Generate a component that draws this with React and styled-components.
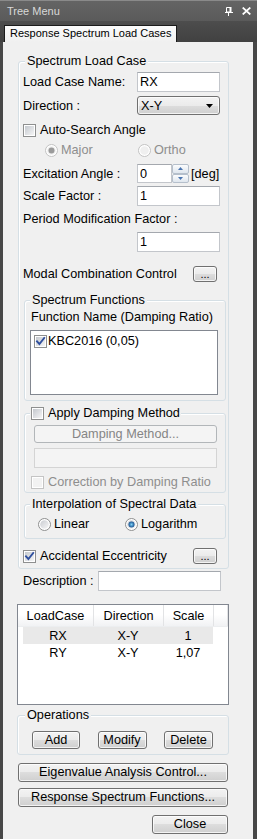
import React from 'react';
import styled, { createGlobalStyle } from 'styled-components';

const GlobalStyle = createGlobalStyle`
  * { box-sizing: border-box; }
  html, body { margin: 0; padding: 0; background: #474747; }
  body {
    font-family: "Liberation Sans", Arial, sans-serif;
    font-size: 12.7px;
    color: #000;
  }
`;

const Window = styled.div`
  width: 257px;
  height: 839px;
  display: flex;
  flex-direction: column;
  background: #474747;
  overflow: hidden;
`;

const TitleBar = styled.div`
  flex: none;
  height: 21px;
  display: flex;
  align-items: center;
  padding: 0 6px 0 7px;
  border-top: 1px solid #8a8a8a;
  background: linear-gradient(#646464, #5a5a5a);
  color: #d8d8d8;
  font-size: 11px;

  span { flex: 1; }
`;

const TitleIcon = styled.svg`
  flex: none;
  display: block;
  margin-left: ${p => p.$ml || 0}px;
`;

const TabStrip = styled.div`
  flex: none;
  height: 21px;
  display: flex;
  align-items: flex-end;
  padding-left: 4px;
  background: linear-gradient(#4d4d4d, #414141);
`;

const Tab = styled.div`
  height: 17px;
  padding: 0 5px;
  line-height: 15px;
  font-size: 11px;
  white-space: nowrap;
  border: 1px solid #1b1b1b;
  border-bottom: 0;
  background: linear-gradient(#fbfbfb, #f0f0f0);
`;

const Content = styled.div`
  flex: 1;
  margin: 0 4px 0 3px;
  padding-left: 14px;
  display: flex;
  flex-direction: column;
  background: #f0f0f0;
`;

const Group = styled.div`
  flex: none;
  display: flex;
  flex-direction: column;
  width: ${p => p.$w}px;
  margin: ${p => p.$mt || 0}px 0 0 ${p => p.$ml || 0}px;
  padding: 0 ${p => p.$pr || 0}px ${p => p.$pb || 0}px ${p => p.$pl || 0}px;
  border: 1px solid #d5dfe5;
  border-radius: 3px;
  box-shadow: inset 1px 1px 0 #fff;
`;

const Legend = styled.div`
  align-self: flex-start;
  display: flex;
  align-items: center;
  gap: 4px;
  height: 16px;
  margin: -9px 0 0 ${p => p.$ml || 0}px;
  padding: 0 ${p => p.$px ?? 2}px;
  background: #f0f0f0;
  white-space: nowrap;
`;

const Row = styled.div`
  flex: none;
  display: flex;
  align-items: center;
  height: ${p => p.$h || 16}px;
  margin: ${p => p.$mt || 0}px 0 0 ${p => p.$ml || 0}px;
  gap: ${p => p.$gap || 0}px;
`;

const Label = styled.span`
  flex: ${p => (p.$grow ? 1 : 'none')};
  width: ${p => (p.$w ? `${p.$w}px` : 'auto')};
  white-space: nowrap;
  color: ${p => (p.$disabled ? '#8e8e8e' : '#000')};
`;

const Item = styled.div`
  flex: none;
  display: flex;
  align-items: center;
  gap: 3px;
  width: ${p => (p.$w ? `${p.$w}px` : 'auto')};
  color: ${p => (p.$disabled ? '#8e8e8e' : '#000')};
`;

const TextBox = styled.input`
  flex: none;
  width: ${p => p.$w}px;
  height: ${p => (p.$h ? `${p.$h}px` : '100%')};
  margin: ${p => p.$mt || 0}px 0 0 ${p => p.$ml || 0}px;
  padding: 0 2px;
  font: inherit;
  color: #000;
  outline: none;
  background: #fff;
  border: 1px solid #c3c6cb;
  border-top-color: #a4a8ae;

  &:disabled {
    background: #f4f4f4;
    border-color: #d4d4d4;
  }
`;

const Button = styled.button`
  flex: none;
  width: ${p => p.$w}px;
  height: ${p => p.$h || 18}px;
  margin: ${p => p.$mt || 0}px ${p => p.$mr || 0}px 0 ${p => p.$ml || 0}px;
  padding: 0;
  font: inherit;
  font-size: ${p => p.$fs || 12.7}px;
  line-height: 1;
  color: #000;
  border: 1px solid #707070;
  border-radius: 3px;
  background: linear-gradient(#f3f3f3 0%, #ebebeb 50%, #dddddd 50%, #cfcfcf 100%);
  box-shadow: inset 0 0 0 1px rgba(255, 255, 255, 0.75);

  &:disabled {
    color: #858585;
    border-color: #b2b6b9;
    background: #f4f4f4;
    box-shadow: none;
  }
`;

const Combo = styled.div`
  flex: none;
  width: 83px;
  height: 19px;
  display: flex;
  align-items: center;
  justify-content: space-between;
  padding: 0 6px 0 3px;
  border: 1px solid #707070;
  border-radius: 3px;
  background: linear-gradient(#f3f3f3 0%, #ebebeb 50%, #dddddd 50%, #cfcfcf 100%);
  box-shadow: inset 0 0 0 1px rgba(255, 255, 255, 0.75);
`;

const Spin = styled.div`
  flex: none;
  width: 17px;
  height: 100%;
  display: flex;
  flex-direction: column;
  margin-right: 2px;
`;

const SpinButton = styled.div`
  flex: 1;
  display: flex;
  align-items: center;
  justify-content: center;
  border: 1px solid #b5bfcb;
  border-radius: 2px;
  background: linear-gradient(#fbfcfd, #dfe6ee);
`;

const ListBox = styled.div`
  flex: none;
  width: 188px;
  height: 65px;
  margin-top: 5px;
  padding: 2px 3px;
  background: #fff;
  border: 1px solid #828790;
`;

const ListItem = styled.div`
  display: flex;
  align-items: center;
  gap: 1px;
  height: 16px;
`;

const Table = styled.div`
  flex: none;
  width: 212px;
  height: 101px;
  margin-top: 13px;
  display: flex;
  flex-direction: column;
  background: #fff;
  border: 1px solid #828790;
`;

const HeaderRow = styled.div`
  flex: none;
  display: flex;
  height: 22px;
  background: linear-gradient(#ffffff 0%, #ffffff 45%, #f1f2f4 100%);
  border-bottom: 1px solid #eceef0;
`;

const HeaderCell = styled.div`
  flex: none;
  width: ${p => p.$w}px;
  display: flex;
  align-items: center;
  justify-content: center;
  border-right: 1px solid #e2e3e5;
`;

const DataRow = styled.div`
  flex: none;
  display: flex;
  height: 17px;
  margin: ${p => p.$mt || 0}px 0 0 5px;
  width: 190px;
  background: ${p => (p.$selected ? '#e9e9e9' : 'transparent')};
`;

const Cell = styled.div`
  flex: none;
  width: ${p => p.$w}px;
  display: flex;
  align-items: center;
  justify-content: center;
`;

const OpRow = styled.div`
  flex: none;
  display: flex;
  justify-content: space-between;
  margin-top: 8px;
  padding: 0 15px 0 14px;
`;

const Svg = styled.svg`
  flex: none;
  display: block;
`;

const CheckBox = ({ checked, disabled }) => (
  <Svg width="13" height="13" viewBox="0 0 13 13">
    <defs>
      <linearGradient id="cbFill" x1="0" y1="0" x2="1" y2="1">
        <stop offset="0" stopColor="#c4c8ce" />
        <stop offset="1" stopColor="#f5f5f6" />
      </linearGradient>
    </defs>
    <rect x="0.5" y="0.5" width="12" height="12" fill="#fff" stroke={disabled ? '#c4c4c4' : '#8e8f8f'} />
    <rect x="2" y="2" width="9" height="9" fill={disabled ? '#f2f2f2' : 'url(#cbFill)'} />
    {checked && (
      <path d="M3 6.3 L5.4 9 L10.2 3" fill="none" stroke="#2f4f9e" strokeWidth="1.9" strokeLinecap="square" />
    )}
  </Svg>
);

const Radio = ({ checked, disabled }) => (
  <Svg width="13" height="13" viewBox="0 0 13 13">
    <defs>
      <linearGradient id="rbFill" x1="0" y1="0" x2="1" y2="1">
        <stop offset="0" stopColor="#c9ccd1" />
        <stop offset="1" stopColor="#f7f7f7" />
      </linearGradient>
      <radialGradient id="rbDot" cx="0.5" cy="0.5" r="0.5">
        <stop offset="0" stopColor="#7fd2f7" />
        <stop offset="1" stopColor="#154f8f" />
      </radialGradient>
    </defs>
    <circle cx="6.5" cy="6.5" r="6" fill="#fff" stroke={disabled ? '#c2c2c2' : '#8e8f8f'} />
    <circle cx="6.5" cy="6.5" r="4.3" fill={disabled ? '#efefef' : 'url(#rbFill)'} />
    {checked && <circle cx="6.5" cy="6.5" r="3" fill={disabled ? '#9a9a9a' : 'url(#rbDot)'} />}
  </Svg>
);

const Arrow = ({ up }) => (
  <Svg width="5" height="3" viewBox="0 0 5 3">
    <path d={up ? 'M0 3 L2.5 0 L5 3 Z' : 'M0 0 L5 0 L2.5 3 Z'} fill="#4a75b0" />
  </Svg>
);

const App = () => (
  <Window>
    <GlobalStyle />
    <TitleBar>
      <span>Tree Menu</span>
      <TitleIcon width="8" height="9" viewBox="0 0 8 9">
        <path d="M1.5 0.5 H5.5 V5 H1.5 Z" fill="none" stroke="#fff" />
        <rect x="4.5" y="0" width="2" height="5" fill="#fff" />
        <rect x="0" y="5" width="8" height="1" fill="#fff" />
        <rect x="3" y="6" width="1" height="3" fill="#fff" />
      </TitleIcon>
      <TitleIcon $ml={9} width="9" height="8" viewBox="0 0 9 8">
        <path d="M0.7 0.5 L8.3 7.5 M8.3 0.5 L0.7 7.5" stroke="#fff" strokeWidth="1.7" />
      </TitleIcon>
    </TitleBar>

    <TabStrip>
      <Tab>Response Spectrum Load Cases</Tab>
    </TabStrip>

    <Content>
      <Group $w={211} $mt={19} $ml={1} $pl={4} $pr={2} $pb={4}>
        <Legend $ml={2}>Spectrum Load Case</Legend>

        <Row $h={20} $mt={3}>
          <Label $w={114}>Load Case Name:</Label>
          <TextBox $w={83} defaultValue="RX" readOnly />
        </Row>

        <Row $h={19} $mt={4}>
          <Label $w={114}>Direction :</Label>
          <Combo>
            <span>X-Y</span>
            <Svg width="7" height="4" viewBox="0 0 7 4">
              <path d="M0 0 H7 L3.5 4 Z" fill="#000" />
            </Svg>
          </Combo>
        </Row>

        <Row $mt={7} $gap={4}>
          <CheckBox />
          <Label>Auto-Search Angle</Label>
        </Row>

        <Row $mt={4} $ml={22}>
          <Item $w={93} $disabled>
            <Radio checked disabled />
            <span>Major</span>
          </Item>
          <Item $disabled>
            <Radio disabled />
            <span>Ortho</span>
          </Item>
        </Row>

        <Row $h={19} $mt={6}>
          <Label $w={114}>Excitation Angle :</Label>
          <TextBox $w={35} defaultValue="0" readOnly />
          <Spin>
            <SpinButton><Arrow up /></SpinButton>
            <SpinButton><Arrow /></SpinButton>
          </Spin>
          <Label>[deg]</Label>
        </Row>

        <Row $h={20} $mt={3}>
          <Label $w={114}>Scale Factor :</Label>
          <TextBox $w={83} defaultValue="1" readOnly />
        </Row>

        <Row $mt={5}>
          <Label>Period Modification Factor :</Label>
        </Row>

        <Row $h={20} $mt={5} $ml={114}>
          <TextBox $w={83} defaultValue="1" readOnly />
        </Row>

        <Row $mt={14}>
          <Label $w={170}>Modal Combination Control</Label>
          <Button $w={24} $h={16} $fs={11}>...</Button>
        </Row>

        <Group $w={202} $mt={18} $ml={1} $pl={5} $pb={5}>
          <Legend>Spectrum Functions</Legend>
          <Row $mt={1} $ml={1}>
            <Label>Function Name (Damping Ratio)</Label>
          </Row>
          <ListBox>
            <ListItem>
              <CheckBox checked />
              <span>KBC2016 (0,05)</span>
            </ListItem>
          </ListBox>
        </Group>

        <Group $w={202} $mt={12} $ml={1} $pl={5} $pb={2}>
          <Legend $px={1}>
            <CheckBox />
            <span>Apply Damping Method</span>
          </Legend>
          <Button $w={183} $h={18} $mt={4} $ml={4} disabled>Damping Method...</Button>
          <TextBox $w={183} $h={20} $mt={5} $ml={4} disabled />
          <Row $mt={6} $ml={1} $gap={4}>
            <CheckBox disabled />
            <Label $disabled>Correction by Damping Ratio</Label>
          </Row>
        </Group>

        <Group $w={202} $mt={11} $ml={1} $pl={5} $pb={6}>
          <Legend>Interpolation of Spectral Data</Legend>
          <Row $mt={4} $ml={8}>
            <Item $w={87}>
              <Radio />
              <span>Linear</span>
            </Item>
            <Item>
              <Radio checked />
              <span>Logarithm</span>
            </Item>
          </Row>
        </Group>

        <Row $mt={9} $gap={4}>
          <CheckBox checked />
          <Label $grow>Accidental Eccentricity</Label>
          <Button $w={24} $h={16} $fs={11} $mr={9}>...</Button>
        </Row>
      </Group>

      <Row $h={20} $mt={2} $ml={6}>
        <Label $w={75}>Description :</Label>
        <TextBox $w={123} readOnly />
      </Row>

      <Table>
        <HeaderRow>
          <HeaderCell $w={76}>LoadCase</HeaderCell>
          <HeaderCell $w={70}>Direction</HeaderCell>
          <HeaderCell $w={50}>Scale</HeaderCell>
          <HeaderCell $w={14} />
        </HeaderRow>
        <DataRow $mt={0} $selected>
          <Cell $w={70}>RX</Cell>
          <Cell $w={70}>X-Y</Cell>
          <Cell $w={50}>1</Cell>
        </DataRow>
        <DataRow>
          <Cell $w={70}>RY</Cell>
          <Cell $w={70}>X-Y</Cell>
          <Cell $w={50}>1,07</Cell>
        </DataRow>
      </Table>

      <Group $w={212} $mt={10} $pb={5}>
        <Legend $ml={7}>Operations</Legend>
        <OpRow>
          <Button $w={48}>Add</Button>
          <Button $w={49}>Modify</Button>
          <Button $w={49}>Delete</Button>
        </OpRow>
      </Group>

      <Button $w={210} $h={19} $mt={8} $ml={1}>Eigenvalue Analysis Control...</Button>
      <Button $w={210} $h={19} $mt={6} $ml={1}>Response Spectrum Functions...</Button>
      <Button $w={76} $h={19} $mt={8} $ml={135}>Close</Button>
    </Content>
  </Window>
);

export default App;
